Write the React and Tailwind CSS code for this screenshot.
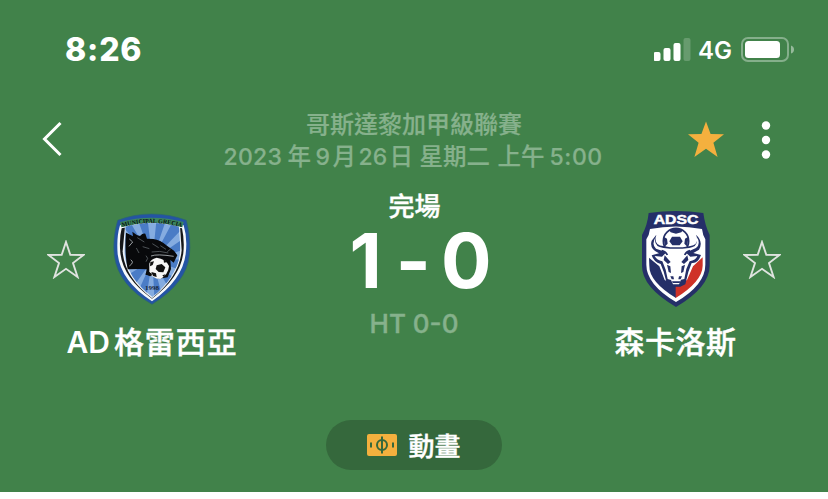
import React from "react";

const STAR = "M19 1.5 L23.6 14 L37 14.2 L26.4 22.8 L30.6 37 L19 28.8 L7.4 37 L11.6 22.8 L1 14.2 L14.4 14 Z";

const OutlineStar = () => (
  <svg className="mt-[4px] h-[39px] w-[38px] shrink-0" viewBox="0 0 38 39">
    <path d="M19 2 L23.3 14.8 L36.5 15 L26 23 L30.6 37 L19 28.8 L7.4 37 L12 23 L1.5 15 L14.7 14.8 Z" fill="none" stroke="#dfe3df" strokeWidth="1.9" />
  </svg>
);

const StatusBar = () => (
  <div className="flex h-[100px] items-center justify-between pl-[65px] pr-[33px]">
    <span className="text-[32px] leading-none font-extrabold tracking-[0.8px]">8:26</span>
    <div className="flex items-center">
      <svg className="h-[24px] w-[38px]" viewBox="0 0 38 24" fill="#fff">
        <rect x="-0.5" y="14" width="7" height="9" rx="2" />
        <rect x="9.5" y="10" width="7" height="13" rx="2" />
        <rect x="19.5" y="5" width="7" height="18" rx="2" />
        <rect x="29.5" y="0" width="7" height="23" rx="2" opacity=".2" />
      </svg>
      <span className="mt-[2px] ml-[6px] w-[35px] text-[24px] leading-none font-semibold">4G</span>
      <svg className="ml-[8px] h-[26px] w-[54px]" viewBox="0 0 54 26">
        <rect x="1" y="1" width="46" height="23" rx="6" fill="none" stroke="#fff" strokeWidth="2" opacity=".36" />
        <rect x="4" y="4" width="35" height="17" rx="3.5" fill="#fff" />
        <path d="M50 8.5 Q53 9.5 53 12.5 Q53 15.5 50 16.5 Z" fill="#fff" opacity=".45" />
      </svg>
    </div>
  </div>
);

const Header = () => (
  <div className="grid h-[86px] grid-cols-[200px_428px_200px]">
    <svg className="mt-[20px] ml-[42px] h-[38px] w-[22px]" viewBox="0 0 22 38">
      <path d="M18.5 3 L2.5 19 L18.5 35" fill="none" stroke="#fff" strokeWidth="3" />
    </svg>
    <div className="flex flex-col items-center pt-[9px] text-[24px] leading-[32px] font-medium whitespace-nowrap text-[#86b18c]">
      <span className="[-webkit-text-stroke:0.2px]">哥斯達黎加甲級聯賽</span>
      <div className="flex text-[23.5px] [-webkit-text-stroke:0.2px]">
        <span className="w-[64px] text-[23px] tracking-[0.3px]">2023</span>
        <span className="w-[28px]">年</span>
        <span className="w-[17px] text-[23px]">9</span>
        <span className="w-[26px]">月</span>
        <span className="w-[31px] text-[23px]">26</span>
        <span className="w-[30px]">日</span>
        <span className="w-[78px]">星期二</span>
        <span className="w-[52px]">上午</span>
        <span className="w-[55px] text-[23px] tracking-[0.6px]">5:00</span>
      </div>
    </div>
    <div className="flex pt-[20px] pl-[59px]">
      <svg className="h-[39px] w-[38px]" viewBox="0 0 38 39">
        <path d={STAR} fill="#f4b03e" />
      </svg>
      <svg className="ml-[36px] h-[40px] w-[12px]" viewBox="0 0 12 40" fill="#fff">
        <circle cx="5" cy="5.5" r="4.2" />
        <circle cx="5" cy="20" r="4.2" />
        <circle cx="5" cy="34.5" r="4.2" />
      </svg>
    </div>
  </div>
);

const GreciaCrest = () => (
  <svg className="h-[105px] w-[100px]" viewBox="0 0 300 315">
    <defs>
      <clipPath id="grecia-field">
        <path d="M77 65 Q155 43 237 65 L241 130 Q239 209 157 276 Q78 216 73 140 Z" />
      </clipPath>
    </defs>
    <path d="M155 27 Q209 27 259 46 Q274 105 268 151 Q260 234 156 298 Q55 240 43 153 Q37 101 53 46 Q102 27 155 27 Z" fill="#2454a4" stroke="#2c6670" strokeWidth="2" />
    <path d="M60 61 Q155 31 251 61 Q263 100 257 147 Q248 224 156 289 Q63 229 53 148 Q49 96 60 61 Z" fill="#f7fafc" />
    <path d="M65 70 Q155 47 246 70 Q254 107 250 143 Q242 216 156 281 Q69 218 61 144 Q57 100 65 70 Z" fill="#151719" />
    <path d="M75 64 Q155 46 240 64 L245 135 Q239 214 156 280 Q73 216 68 139 Z" fill="#edf3f9" />
    <g clipPath="url(#grecia-field)">
      <path d="M60 30 H250 V290 H60 Z" fill="#85ace0" />
      <path d="M157 165 L70 67 L92 54 Z M157 165 L115 48 L143 45 Z M157 165 L170 40 L198 45 Z M157 165 L219 48 L243 75 Z M157 165 L248 102 L248 135 Z M157 165 L248 163 L239 194 Z M157 165 L222 220 L204 245 Z M157 165 L186 270 L164 290 Z M157 165 L139 276 L119 250 Z M157 165 L104 240 L83 210 Z" fill="#4a7cc6" />
    </g>
    <path d="M60 51 Q155 25 251 51 L247 67 Q155 39 64 67 Z" fill="#3c855f" />
    <path id="grecia-arc" d="M65 67 Q155 41 247 67" fill="none" />
    <text fontSize="19" fontFamily="Liberation Serif, serif" fontWeight="700" fill="#07130f" textAnchor="middle">
      <textPath href="#grecia-arc" startOffset="50%" textLength="180" lengthAdjust="spacingAndGlyphs">MUNICIPAL GRECIA</textPath>
    </text>
    <path d="M78 83 Q90 88 99 94 L97 80 Q108 90 120 93 Q128 84 136 86 L141 101 L160 102 Q180 104 202 123 L222 137 L232 151 L221 173 L211 165 L213 192 L203 217 L177 221 L158 213 L137 209 L140 193 L118 192 L83 193 Q73 145 78 83 Z" fill="#08090b" />
    <path d="M88 102 L98 111 L87 124 M92 164 Q104 172 88 183 M153 153 Q171 146 221 154" fill="none" stroke="#dfe7ec" strokeWidth="2" />
    <path d="M109 129 L117 144 M138 152 L143 160 L138 170 M155 141 Q178 136 205 144 M181 122 L198 133 M202 140 L212 132 M112 98 L133 111 M128 125 L148 131 M157 116 L176 128" fill="none" stroke="#6f777c" strokeWidth="2" />
    <path d="M148 176 Q151 162 170 158 Q197 161 207 183 Q205 209 181 222 Q155 220 148 200 Z" fill="#f7f7f7" />
    <path d="M170 181 L185 177 L196 187 L190 202 L176 201 L167 192 Z M151 171 L162 169 L158 180 L150 184 Z M154 201 L168 205 L170 216 L159 213 Z M190 160 L202 171 L192 173 Z M187 211 L196 208 L192 217 Z" fill="#111" />
    <path d="M142 198 L157 207 L151 214 L136 208 Z" fill="#0a0a0a" />
    <text x="156" y="256" fontSize="20" fontFamily="Liberation Serif, serif" fontWeight="700" textLength="42" lengthAdjust="spacingAndGlyphs" textAnchor="middle" fill="#192539">1998</text>
  </svg>
);

const CarlosCrest = () => (
  <svg className="h-[105px] w-[90px]" viewBox="0 0 270 315">
    <path d="M56 24 Q138 12 220 24 Q225 62 239 90 V182 Q239 246 138 306 Q35 246 36 182 V90 Q52 62 56 24 Z" fill="#252f68" />
    <path d="M60 72 Q137 57 216 72 Q218 90 226 103 V179 Q226 239 138 291 Q49 238 49 179 V103 Q58 90 60 72 Z" fill="#fff" />
    <path d="M57 158 L88 184 L104 225 L138 243 V279 Q57 229 58 182 Z" fill="#252f68" />
    <path d="M218 157 L189 184 L171 225 L137 243 V279 Q217 229 218 182 Z" fill="#cf3127" />
    <text x="138" y="57" fontSize="39" fontFamily="Liberation Sans, sans-serif" fontWeight="700" textAnchor="middle" textLength="134" lengthAdjust="spacingAndGlyphs" fill="#fff" stroke="#fff" strokeWidth="1.5">ADSC</text>
    <circle cx="138" cy="108" r="38" fill="#fff" stroke="#252f68" strokeWidth="5" />
    <path d="M117 75 Q138 66 159 75 L154 82 L138 86 L122 82 Z M126 95 H150 L158 109 L149 121 H127 L118 109 Z M101 95 L111 101 L113 116 L104 125 Z M175 95 L165 101 L163 116 L172 125 Z" fill="#252f68" />
    <path d="M79 89 Q70 122 100 123 L121 127 H158 L181 123 Q210 118 198 89 Q221 110 207 134 L190 144 L213 150 Q203 177 185 174 L175 201 L166 238 L151 245 H126 L111 238 L101 200 L92 177 Q71 171 65 151 L87 145 Q57 132 65 107 Z" fill="#252f68" />
    <path d="M78 94 Q67 124 100 129 L120 131 H157 L178 129 Q208 125 199 94 Q214 116 198 129 L178 138 L169 144 L181 155 L202 153 Q197 166 179 169 L169 192 L163 222 L153 224 L147 238 H129 L123 225 L113 222 L107 194 L97 169 Q81 166 74 153 L96 155 L107 144 L98 138 L78 131 Q63 119 78 94 Z" fill="#fff" />
    <path d="M104 151 L122 171 L114 177 L101 165 Z M172 151 L154 171 L162 177 L175 165 Z M111 179 L121 184 L123 204 L116 201 Z M165 179 L155 184 L153 204 L160 201 Z M121 214 H130 L132 223 H125 Z M147 214 H156 L152 223 H145 Z M126 229 H151 L149 234 H128 Z" fill="#252f68" />
    <path d="M95 137 Q108 140 112 150 M180 137 Q168 140 164 150" fill="none" stroke="#252f68" strokeWidth="5" />
  </svg>
);

const Scoreboard = () => (
  <div className="grid h-[234px] grid-cols-[303px_220px_305px]">
    <div className="flex flex-col items-center pt-[19px]">
      <div className="flex w-full items-center pl-[47px]">
        <OutlineStar />
        <div className="ml-[15px]">
          <GreciaCrest />
        </div>
      </div>
      <div className="mt-[12px] flex text-[30px] leading-[40px] font-semibold">
        <span className="mr-[4px] ml-[1px]">AD</span>
        <span className="font-medium tracking-[0.9px] [-webkit-text-stroke:0.4px]">格雷西亞</span>
      </div>
    </div>

    <div className="flex flex-col items-center">
      <div className="mt-[7px] ml-[3px] h-[38px] text-[26px] leading-[28px] font-medium [-webkit-text-stroke:0.4px]">完場</div>
      <div className="ml-[15px] flex h-[60px] items-center text-[75px] leading-[60px] font-bold">
        <span>1</span>
        <span className="mr-[9px] ml-[13px] w-[37px] text-center">-</span>
        <span>0</span>
      </div>
      <div className="mt-[17px] ml-[2px] text-[26px] leading-[32px] font-medium text-[#86b18c] [-webkit-text-stroke:0.4px]">HT 0-0</div>
    </div>

    <div className="flex flex-col items-center pt-[19px]">
      <div className="flex w-full items-center pl-[107px]">
        <CarlosCrest />
        <div className="ml-[23px]">
          <OutlineStar />
        </div>
      </div>
      <div className="mt-[12px] text-[30px] leading-[40px] font-medium tracking-[0.5px] [-webkit-text-stroke:0.4px]">森卡洛斯</div>
    </div>
  </div>
);

const AnimationButton = () => (
  <button className="mx-auto flex h-[50px] w-[176px] items-center justify-center gap-[11px] rounded-full bg-[#35683c]">
    <svg className="h-[22px] w-[30px]" viewBox="0 0 30 22">
      <rect width="30" height="22" rx="2" fill="#f4b03e" />
      <circle cx="15" cy="11" r="5" fill="none" stroke="#35683c" strokeWidth="2" />
      <path d="M15 2.5 V19.5 M4 8.5 V13.5 M26 8.5 V13.5" stroke="#35683c" strokeWidth="2" />
    </svg>
    <span className="mt-[3px] text-[26px] leading-[47px] font-medium [-webkit-text-stroke:0.4px]">動畫</span>
  </button>
);

const App = () => {
  return (
    <div className="h-[499px] w-[828px] overflow-hidden bg-white">
      <div className="h-[492px] bg-[#41824a] font-[Inter,'Noto_Sans_CJK_TC',sans-serif] text-white">
        <StatusBar />
        <Header />
        <Scoreboard />
        <AnimationButton />
      </div>
    </div>
  );
};

export default App;
